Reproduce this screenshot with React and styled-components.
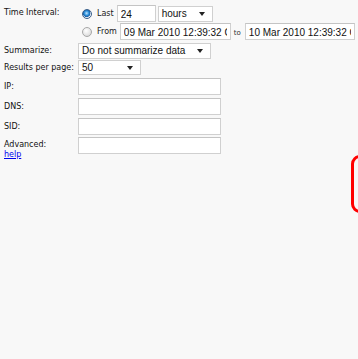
import styled, { createGlobalStyle } from 'styled-components';

const GlobalStyle = createGlobalStyle`
    html, body {
        margin: 0;
        padding: 0;
        background: #f8f8f8;
        height: 100%;
    }
    #root {
        height: 100%;
    }
`;

const App = () => {
    return(
        <Page>
            <GlobalStyle />
            <Form>
                <Label top>Time Interval:</Label>
                <Interval>
                    <IntervalRow>
                        <Radio checked />
                        <RadioText>Last</RadioText>
                        <TextBox width={39} defaultValue="24" />
                        <Select width={55} value="hours" />
                    </IntervalRow>
                    <IntervalRow>
                        <Radio />
                        <RadioText>From</RadioText>
                        <TextBox width={111} defaultValue="09 Mar 2010 12:39:32 GMT" />
                        <ToText>to</ToText>
                        <TextBox width={110} defaultValue="10 Mar 2010 12:39:32 GMT" />
                    </IntervalRow>
                </Interval>

                <Label gap={3}>Summarize:</Label>
                <Field gap={3}><Select width={133} value="Do not summarize data" /></Field>

                <Label gap={1}>Results per page:</Label>
                <Field gap={1}><Select width={63} height={15} value="50" /></Field>

                <Label gap={3}>IP:</Label>
                <Field gap={3}><TextBox width={143} /></Field>

                <Label gap={3}>DNS:</Label>
                <Field gap={3}><TextBox width={143} /></Field>

                <Label gap={3}>SID:</Label>
                <Field gap={3}><TextBox width={143} /></Field>

                <Label gap={2} top>
                    Advanced:
                    <HelpLink href="#">help</HelpLink>
                </Label>
                <Field gap={2} top><TextBox width={143} /></Field>
            </Form>
            <Callout />
        </Page>
    )
};

const Select = ({ width, height, value }) => (
    <SelectBox width={width} height={height}>
        <span>{value}</span>
        <Arrow />
    </SelectBox>
);

const Page = styled.div`
    position: relative;
    min-height: 100%;
    overflow: hidden;
    background: #f8f8f8;
`;

const Form = styled.div`
    display: grid;
    grid-template-columns: 74px auto;
    padding: 5px 0 0 4px;
    font-family: "DejaVu Sans", Verdana, sans-serif;
    font-size: 8px;
    line-height: 10px;
    color: #111;
`;

const Label = styled.div`
    display: flex;
    flex-direction: column;
    justify-content: ${p => p.top ? 'flex-start' : 'center'};
    padding-top: ${p => p.top ? '3px' : '0'};
    margin-top: ${p => p.gap || 0}px;
`;

const HelpLink = styled.a`
    color: #0000ee;
    text-decoration: underline;
`;

const Field = styled.div`
    display: flex;
    align-items: ${p => p.top ? 'flex-start' : 'center'};
    margin-top: ${p => p.gap || 0}px;
`;

const Interval = styled.div`
    display: flex;
    flex-direction: column;
    gap: 1px;
`;

const IntervalRow = styled.div`
    display: flex;
    align-items: center;
    gap: 2px;
`;

const Radio = styled.span`
    box-sizing: border-box;
    width: 10px;
    height: 10px;
    margin: 0 3px 0 4px;
    border-radius: 50%;
    border: 1px solid ${p => p.checked ? '#3a5f8a' : '#a8a8a8'};
    background: ${p => p.checked
        ? 'radial-gradient(circle at 45% 40%, #bfe3ff 0%, #2b8fd8 35%, #1a5fa8 55%, #e8eef5 62%, #ffffff 100%)'
        : 'radial-gradient(circle at 40% 35%, #ffffff 0%, #e4e4e4 60%, #c8c8c8 100%)'};
`;

const RadioText = styled.span`
    color: #222;
    margin-right: 1px;
    padding-top: 1px;
`;

const ToText = styled.span`
    font-size: 7px;
    color: #333;
    margin: 2px 2px 0 1px;
`;

const TextBox = styled.input`
    box-sizing: border-box;
    width: ${p => p.width}px;
    height: 17px;
    margin: 0;
    padding: 1px 3px 0;
    border: 1px solid #d0d0d0;
    border-top-color: #c4c4c4;
    background: #fff;
    font-family: "Liberation Sans", Arial, sans-serif;
    font-size: 10px;
    color: #111;
    outline: none;
`;

const SelectBox = styled.div`
    box-sizing: border-box;
    position: relative;
    display: flex;
    align-items: center;
    width: ${p => p.width}px;
    height: ${p => p.height || 16}px;
    padding: 0 3px;
    border: 1px solid #d0d0d0;
    background: #fff;
    font-family: "Liberation Sans", Arial, sans-serif;
    font-size: 10px;
    color: #111;
    white-space: nowrap;
    overflow: hidden;
`;

const Arrow = styled.span`
    position: absolute;
    right: 7px;
    top: 50%;
    margin-top: -2px;
    width: 0;
    height: 0;
    border-left: 3.5px solid transparent;
    border-right: 3.5px solid transparent;
    border-top: 4px solid #222;
`;

const Callout = styled.div`
    position: absolute;
    left: 351px;
    top: 155px;
    width: 40px;
    height: 58px;
    box-sizing: border-box;
    border: 3px solid #ff0000;
    border-radius: 9px;
`;

export default App;
